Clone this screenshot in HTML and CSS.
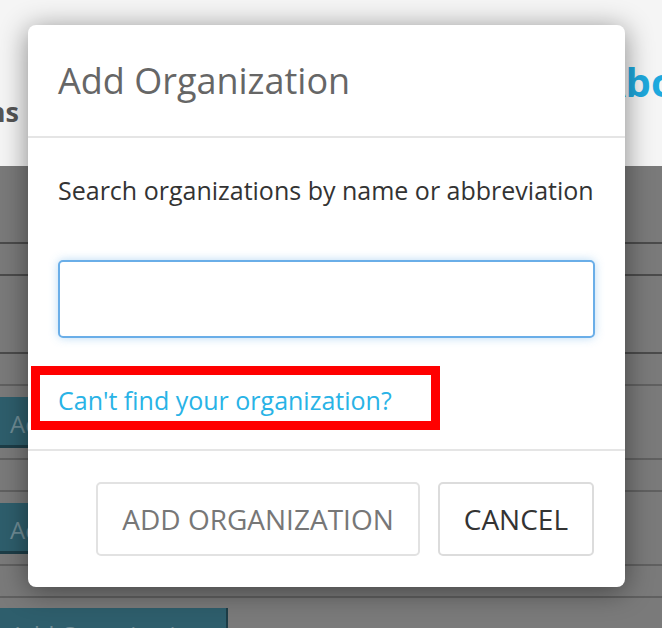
FILE: index.html
```html
<!DOCTYPE html>
<html lang="en">

<head>
    <meta charset="UTF-8">
    <meta name="viewport" content="width=device-width, initial-scale=1.0">
    <title>Add Organization</title>
    <link rel="stylesheet" href="styles.css">
</head>

<body>
    <div class="page">
        <div class="topbar">
            <div class="side-title"><span>Organizations</span></div>
            <a class="nav-link" href="#">About</a>
        </div>
        <div class="list">
            <div class="row row-a"></div>
            <div class="row row-b"></div>
            <div class="row row-c"></div>
            <div class="row row-d light"></div>
            <div class="row row-btn light"><span class="teal-btn">Add Organization</span></div>
            <div class="row row-d light"></div>
            <div class="row row-btn light"><span class="teal-btn">Add Organization</span></div>
            <div class="row row-d light"></div>
            <div class="row row-last"><span class="teal-btn">Add Organization</span></div>
        </div>
    </div>

    <div class="modal">
        <div class="modal-header">
            <h2>Add Organization</h2>
        </div>
        <div class="modal-body">
            <label for="orgSearch">Search organizations by name or abbreviation</label>
            <input type="text" id="orgSearch" class="search-input">
            <a class="help-link" href="#">Can't find your organization?</a>
            <div class="highlight"></div>
        </div>
        <div class="modal-footer">
            <button class="btn btn-disabled" type="button">ADD ORGANIZATION</button>
            <button class="btn" type="button">CANCEL</button>
        </div>
    </div>
</body>

</html>
```

FILE: styles.css
```css
body {
    font-family: "Open Sans", Arial, sans-serif;
    margin: 0;
    padding: 0;
    background-color: #7a7a7a;
    overflow: hidden;
}

.page {
    width: 662px;
    height: 628px;
    overflow: hidden;
}

.topbar {
    height: 166px;
    background-color: #f5f5f5;
    display: flex;
    overflow: hidden;
}

.side-title {
    width: 19px;
    flex-shrink: 0;
    display: flex;
    justify-content: flex-end;
    padding-top: 93px;
    font-size: 27px;
    font-weight: bold;
    color: #555;
    white-space: nowrap;
}

.nav-link {
    margin-left: 579px;
    padding-top: 54px;
    font-size: 40px;
    font-weight: bold;
    color: #1ea9de;
    text-decoration: none;
    white-space: nowrap;
}

.list {
    background-color: #7a7a7a;
}

.row {
    border-bottom: 2px solid #4b4b4b;
    box-sizing: border-box;
}

.row.light {
    border-bottom-color: #606060;
}

.row-a {
    height: 78px;
}

.row-b {
    height: 32px;
}

.row-c {
    height: 78px;
}

.row-d {
    height: 32px;
}

.row-btn {
    height: 74px;
    padding-top: 11px;
}

.row-last {
    padding-top: 10px;
    border-bottom: none;
}

.teal-btn {
    display: block;
    width: 228px;
    height: 51px;
    box-sizing: border-box;
    background-color: #2e5e6c;
    border-bottom: 3px solid #1d3d47;
    border-right: 2px solid #1d3d47;
    color: #6f8c95;
    font-size: 24px;
    padding: 10px 0 0 10px;
    white-space: nowrap;
    overflow: hidden;
}

.modal {
    position: absolute;
    left: 28px;
    top: 25px;
    width: 597px;
    height: 562px;
    background-color: white;
    border-radius: 8px;
    box-shadow: 0 4px 28px rgba(0, 0, 0, 0.45);
    display: flex;
    flex-direction: column;
}

.modal-header {
    height: 111px;
    flex-shrink: 0;
    border-bottom: 2px solid #e5e5e5;
    padding: 0 30px;
    display: flex;
    align-items: center;
}

.modal-header h2 {
    margin: 0;
    font-size: 36px;
    font-weight: normal;
    color: #666;
    white-space: nowrap;
}

.modal-body {
    position: relative;
    height: 313px;
    flex-shrink: 0;
    border-bottom: 2px solid #e5e5e5;
    padding: 0 30px;
    box-sizing: border-box;
}

.modal-body label {
    display: block;
    margin-top: 35px;
    font-size: 25px;
    color: #333;
    white-space: nowrap;
}

.search-input {
    display: block;
    width: 100%;
    height: 78px;
    box-sizing: border-box;
    margin-top: 53px;
    border: 2px solid #6aaee8;
    border-radius: 5px;
    box-shadow: 0 0 10px rgba(102, 175, 233, 0.45);
    outline: none;
}

.help-link {
    display: inline-block;
    margin-top: 45px;
    font-size: 25px;
    color: #29b3e6;
    text-decoration: none;
}

.highlight {
    position: absolute;
    left: 3px;
    top: 228px;
    width: 391px;
    height: 46px;
    border: 9px solid #ff0000;
}

.modal-footer {
    flex: 1;
    display: flex;
    justify-content: flex-end;
    align-items: flex-start;
    gap: 18px;
    padding: 31px 31px 0;
}

.btn {
    height: 74px;
    background-color: white;
    border: 2px solid #dcdcdc;
    border-radius: 5px;
    padding: 0 24px;
    font-family: "Open Sans", Arial, sans-serif;
    font-size: 28px;
    color: #333;
    white-space: nowrap;
    cursor: pointer;
}

.btn-disabled {
    color: #777;
    border-color: #e2e2e2;
}
```
